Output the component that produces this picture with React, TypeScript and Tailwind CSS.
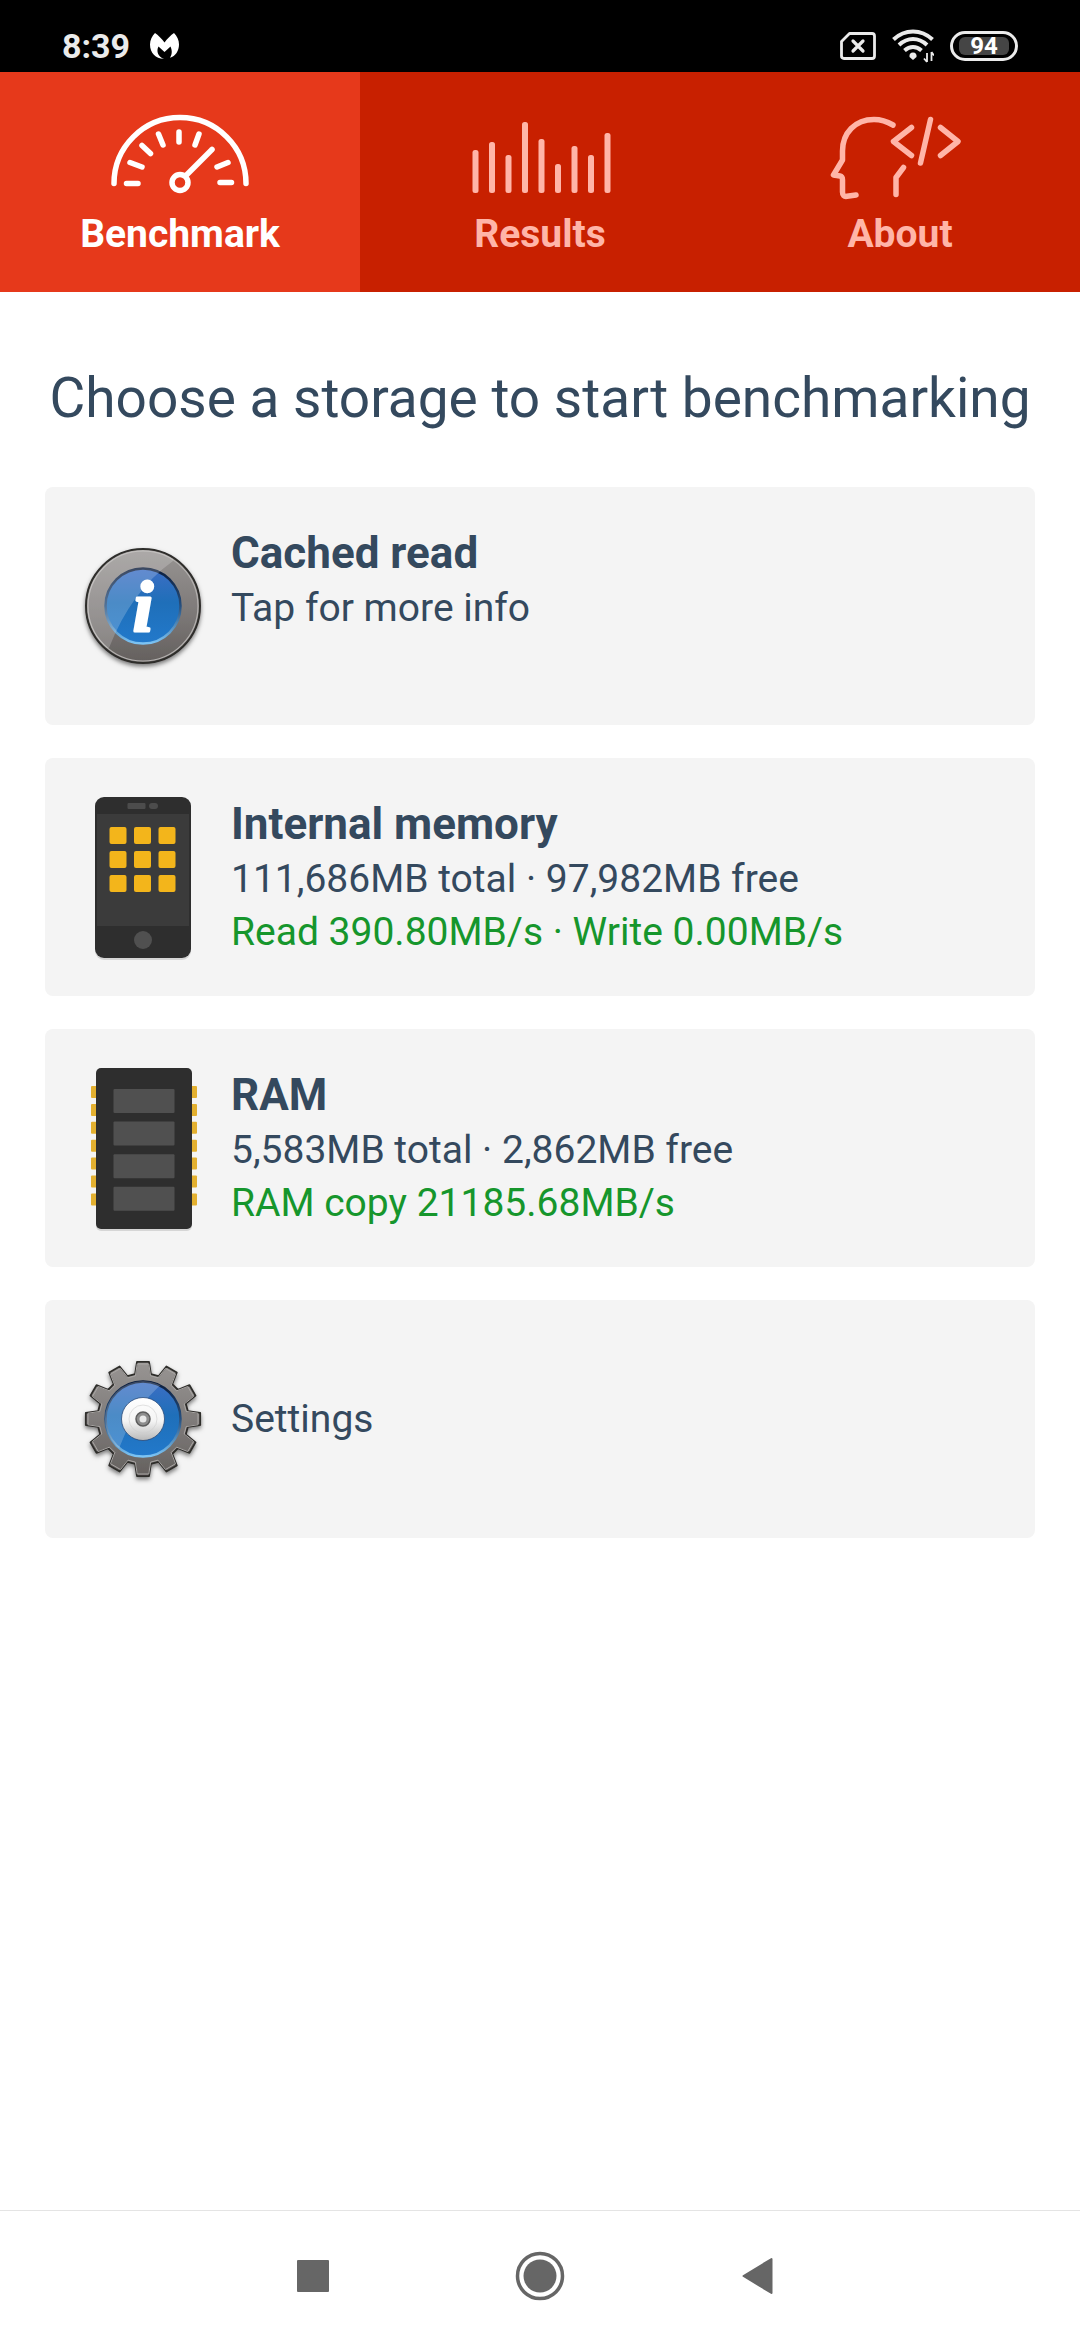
import type { ReactNode } from "react";

type Tab = {
  id: string;
  label: string;
  icon: ReactNode;
};

type StorageItem = {
  id: string;
  title?: string;
  detail: string;
  speed?: string;
  icon: ReactNode;
};

/* ---------- Tab icons ---------- */

function GaugeIcon() {
  return (
    <svg className="h-[90px] w-[144px]" viewBox="0 0 144 90" fill="none" stroke="currentColor" strokeWidth="5.5" strokeLinecap="round">
      <path d="M6 71.5A66 66 0 0 1 138 71.5" />
      <path d="M18.5 71.5H30M22 50.5L34 55M34 33.5L42.500 41.500M50.500 22L55 33M71 20V30M91 22L87 33M120 50.500L109 55M112 70.500H123.500" />
      <path d="M104 37.500L79 62.500" />
      <circle cx="72" cy="70.5" r="8" />
    </svg>
  );
}

const BARS = [38, 30, 43, 10, 27, 52, 34, 43, 21];

function BarsIcon() {
  return (
    <svg className="h-[90px] w-[144px]" viewBox="0 0 144 90" fill="currentColor">
      {BARS.map((top, i) => (
        <rect key={i} x={4.5 + i * 16.5} y={top} width="6" height={81 - top} rx="2.5" />
      ))}
    </svg>
  );
}

function CoderIcon() {
  return (
    <svg
      className="h-[90px] w-[144px]"
      viewBox="0 0 144 90"
      fill="none"
      stroke="currentColor"
      strokeWidth="5.5"
      strokeLinecap="round"
      strokeLinejoin="round"
    >
      <path d="M65 13C59 9.500 53 7.500 46 7.500C27 7.500 14.500 21 14.500 39V48L5.500 63L12 64Q14.500 64.500 14.500 68V80Q14.500 85 19 84.300L28 83" />
      <path d="M75.500 55.500L68 65.500V82.500" />
      <path d="M83.500 15.500L65.500 29.500L83.500 43.500M102.500 7.500L92.500 51M112.500 15.500L130 29.500L112.500 43.500" />
    </svg>
  );
}

/* ---------- Card icons ---------- */

function MetalDefs({ id }: { id: string }) {
  return (
    <defs>
      <linearGradient id={`${id}-metal`} x1="0" y1="0" x2="0" y2="1">
        <stop offset="0" stopColor="#989593" />
        <stop offset="0.5" stopColor="#807c7b" />
        <stop offset="1" stopColor="#64605e" />
      </linearGradient>
      <linearGradient id={`${id}-blue`} x1="0" y1="0" x2="0" y2="1">
        <stop offset="0" stopColor="#3d6ec4" />
        <stop offset="0.45" stopColor="#1f6fb9" />
        <stop offset="1" stopColor="#2279cb" />
      </linearGradient>
      <linearGradient id={`${id}-rim`} x1="0" y1="0" x2="0" y2="1">
        <stop offset="0" stopColor="#0b1c3b" />
        <stop offset="0.5" stopColor="#27507f" />
        <stop offset="1" stopColor="#7cc4f5" />
      </linearGradient>
      <linearGradient id={`${id}-hub`} x1="0" y1="0" x2="0" y2="1">
        <stop offset="0" stopColor="#ffffff" />
        <stop offset="0.55" stopColor="#f4f4f4" />
        <stop offset="1" stopColor="#b9b9b9" />
      </linearGradient>
      <filter id={`${id}-shadow`} x="-20%" y="-20%" width="140%" height="140%">
        <feDropShadow dx="0" dy="2.5" stdDeviation="2" floodColor="#000" floodOpacity="0.5" />
      </filter>
    </defs>
  );
}

function InfoIcon() {
  return (
    <svg className="h-[170px] w-[130px]" viewBox="-65 -85 130 170">
      <MetalDefs id="info" />
      <clipPath id="info-disc">
        <circle r="56" />
      </clipPath>
      <circle r="57" fill="url(#info-metal)" stroke="#2f2d2c" strokeWidth="2" filter="url(#info-shadow)" />
      <circle r="55" fill="none" stroke="#b5b2b0" strokeWidth="1.200" />
      <circle r="37.500" fill="url(#info-blue)" stroke="url(#info-rim)" strokeWidth="2.500" />
      <path d="M30 -45Q-12 -15 -34 42L-70 42V-70H30Z" fill="#fff" opacity="0.2" clipPath="url(#info-disc)" />
      <text
        x="0"
        y="25"
        textAnchor="middle"
        fill="#fff"
        stroke="#fff"
        strokeWidth="3"
        strokeLinejoin="round"
        fontFamily="Liberation Serif, serif"
        fontSize="72"
        fontWeight="700"
        fontStyle="italic"
      >
        i
      </text>
    </svg>
  );
}

const APP_ROWS = [35, 59, 83];
const APP_COLS = [31.5, 56, 80.5];

function PhoneIcon() {
  return (
    <svg className="h-[170px] w-[130px]" viewBox="0 0 130 170">
      <rect x="17" y="7" width="96" height="161" rx="9" fill="#000" opacity="0.12" />
      <rect x="17" y="5" width="96" height="161" rx="9" fill="#2e2e2e" />
      <rect x="19" y="22" width="92" height="112" fill="#3b3b3b" />
      <rect x="49.500" y="11" width="18" height="6" rx="1" fill="#4c4c4c" />
      <rect x="71" y="11" width="9" height="6" rx="3" fill="#4c4c4c" />
      {APP_ROWS.map((y) => APP_COLS.map((x) => <rect key={`${x}-${y}`} x={x} y={y} width="17" height="17" rx="2" fill="#f3b51b" />))}
      <circle cx="65" cy="148" r="9" fill="#505050" />
    </svg>
  );
}

function RamIcon() {
  return (
    <svg className="h-[170px] w-[130px]" viewBox="0 0 130 170">
      {Array.from({ length: 7 }, (_, i) => (
        <rect key={i} x="13" y={23 + i * 17.9} width="106" height="12" rx="1" fill="#e3b02f" />
      ))}
      <rect x="18" y="7" width="96" height="161" rx="5" fill="#000" opacity="0.12" />
      <rect x="18" y="5" width="96" height="161" rx="5" fill="#2e2e2e" />
      {Array.from({ length: 4 }, (_, i) => (
        <rect key={i} x="35.500" y={26 + i * 32.6} width="61" height="24" rx="1" fill="#505050" />
      ))}
    </svg>
  );
}

// One tooth per 30deg, walked clockwise from the top
function gearPath(outer: number, root: number) {
  const at = (r: number, deg: number) => {
    const a = ((deg - 90) * Math.PI) / 180;
    return `${(r * Math.cos(a)).toFixed(2)} ${(r * Math.sin(a)).toFixed(2)}`;
  };
  const points: string[] = [];
  for (let t = 0; t < 360; t += 30) {
    points.push(at(root, t - 10), at(outer, t - 6), at(outer, t + 6), at(root, t + 10));
  }
  return `M${points.join("L")}Z`;
}

function GearIcon() {
  return (
    <svg className="h-[170px] w-[130px]" viewBox="-65 -85 130 170">
      <MetalDefs id="gear" />
      <clipPath id="gear-disc">
        <circle r="38" />
      </clipPath>
      <path
        d={gearPath(57.5, 45.5)}
        fill="url(#gear-metal)"
        stroke="#2f2d2c"
        strokeWidth="1.800"
        strokeLinejoin="round"
        filter="url(#gear-shadow)"
      />
      <path d={gearPath(55.3, 43.8)} fill="none" stroke="#a9a6a4" strokeWidth="1" strokeLinejoin="round" />
      <circle r="37.500" fill="url(#gear-blue)" stroke="url(#gear-rim)" strokeWidth="2.500" />
      <path d="M25 -40Q-12 -12 -28 42L-70 42V-70H25Z" fill="#fff" opacity="0.2" clipPath="url(#gear-disc)" />
      <circle r="21.500" fill="url(#gear-hub)" stroke="#2b4a78" strokeWidth="0.800" />
      <circle r="14" fill="none" stroke="#cfcfcf" strokeWidth="0.600" />
      <circle r="7" fill="#8d8d8d" stroke="#5c5c5c" strokeWidth="1.500" />
      <circle r="3.500" fill="#e8e8e8" />
    </svg>
  );
}

/* ---------- Status bar ---------- */

function StatusBar() {
  return (
    <header className="flex h-[72px] items-center justify-between bg-black px-[62px] pt-5 text-[#ebebeb]">
      <div className="flex items-center gap-5">
        <span className="text-[34px] leading-10 font-bold">8:39</span>
        <svg className="h-[26px] w-[29px]" viewBox="0 0 29 26" fill="#fff">
          <path d="M5 0C8 2 12 6 14.500 9.500C17 6 21 2 24 0C27 3 29 7 29 11.500C29 18 25.500 23 20 24.800C22 21.500 22.500 18 20.500 13.500L14.500 19L8.500 13.500C6 18 8 24 14 25.800C6 26 0 20 0 11.500C0 7 2 3 5 0Z" />
        </svg>
      </div>
      <div className="flex items-center gap-4">
        <svg className="h-7 w-9" viewBox="0 0 36 28" fill="none" stroke="currentColor" strokeWidth="2.800" strokeLinejoin="round" strokeLinecap="round">
          <path d="M9.500 1.500H32Q34.500 1.500 34.500 4V24Q34.500 26.500 32 26.500H4Q1.500 26.500 1.500 24V9.500Z" />
          <path d="M13 9L23 19M23 9L13 19" strokeWidth="3.200" />
        </svg>
        <svg className="h-[34px] w-[42px]" viewBox="0 0 42 34" fill="none" stroke="currentColor" strokeWidth="4">
          <path d="M1.500 10.500Q10 2.500 21 2.500T40.500 10.500M7 16Q13.500 10 21 10T35 16M12.500 21.500Q16.500 18 21 18T29.500 21.500" />
          <path d="M21 31L17.500 28Q17 23.500 21 23.500T24.500 28Z" fill="currentColor" stroke="none" />
          <path d="M35 24V33M39.500 23V32M35 33L32 29.500M39.500 23L42 26.500" strokeWidth="1.800" />
        </svg>
        <div className="flex h-[30px] w-[68px] items-center justify-center rounded-full border-3 border-current">
          <span className="flex h-[18px] w-[50px] items-center justify-center rounded-md bg-[#454545] text-2xl leading-none font-bold text-white">94</span>
        </div>
      </div>
    </header>
  );
}

/* ---------- Screen ---------- */

const TABS: Tab[] = [
  { id: "benchmark", label: "Benchmark", icon: <GaugeIcon /> },
  { id: "results", label: "Results", icon: <BarsIcon /> },
  { id: "about", label: "About", icon: <CoderIcon /> },
];

const ITEMS: StorageItem[] = [
  { id: "cached", title: "Cached read", detail: "Tap for more info", icon: <InfoIcon /> },
  {
    id: "internal",
    title: "Internal memory",
    detail: "111,686MB total · 97,982MB free",
    speed: "Read 390.80MB/s · Write 0.00MB/s",
    icon: <PhoneIcon />,
  },
  {
    id: "ram",
    title: "RAM",
    detail: "5,583MB total · 2,862MB free",
    speed: "RAM copy 21185.68MB/s",
    icon: <RamIcon />,
  },
  { id: "settings", detail: "Settings", icon: <GearIcon /> },
];

function TabBar({ active }: { active: string }) {
  return (
    <nav className="grid grid-cols-3 bg-[#c82000]">
      {TABS.map((tab) => (
        <button
          key={tab.id}
          type="button"
          aria-current={tab.id === active ? "page" : undefined}
          className={`flex flex-col items-center gap-2 pt-10 pb-[34px] ${
            tab.id === active ? "bg-[#e6391b] text-white" : "text-[#ffb5a8]"
          }`}
        >
          {tab.icon}
          <span className="text-[39px] leading-[48px] font-bold">{tab.label}</span>
        </button>
      ))}
    </nav>
  );
}

function StorageCard({ item }: { item: StorageItem }) {
  return (
    <button type="button" className="flex w-full items-center gap-[23px] rounded-lg bg-[#f4f4f4] px-[33px] py-[34px] text-left">
      <span className="shrink-0">{item.icon}</span>
      <span className={`flex flex-col ${item.title ? "min-h-[164px]" : ""}`}>
        {item.title && <span className="text-[44px] leading-[58px] font-bold">{item.title}</span>}
        <span className="text-[39px] leading-[53px]">{item.detail}</span>
        {item.speed && <span className="text-[39px] leading-[53px] text-[#16962c]">{item.speed}</span>}
      </span>
    </button>
  );
}

export default function App() {
  return (
    <div className="flex min-h-screen flex-col bg-white font-[Roboto,sans-serif] text-[#34495e]">
      <StatusBar />
      <TabBar active="benchmark" />

      <main className="flex-1 px-[45px] pt-[74px]">
        <h1 className="text-center text-[55px] leading-[64px]">Choose a storage to start benchmarking</h1>
        <div className="mt-[57px] flex flex-col gap-[33px]">
          {ITEMS.map((item) => (
            <StorageCard key={item.id} item={item} />
          ))}
        </div>
      </main>

      {/* System navigation */}
      <footer className="flex h-[130px] items-center justify-center gap-[131px] border-t border-[#e4e4e4] text-[#666]">
        <button type="button" aria-label="Recent apps">
          <svg className="h-24 w-24" viewBox="-48 -48 96 96" fill="currentColor">
            <rect x="-16" y="-16" width="32" height="32" rx="1" />
          </svg>
        </button>
        <button type="button" aria-label="Home">
          <svg className="h-24 w-24" viewBox="-48 -48 96 96" fill="currentColor">
            <circle r="22.500" fill="none" stroke="currentColor" strokeWidth="3.500" />
            <circle r="16.500" />
          </svg>
        </button>
        <button type="button" aria-label="Back">
          <svg className="h-24 w-24" viewBox="-48 -48 96 96" fill="currentColor" stroke="currentColor" strokeWidth="2" strokeLinejoin="round">
            <path d="M-23.500 0L4.500 -17V17Z" />
          </svg>
        </button>
      </footer>
    </div>
  );
}
